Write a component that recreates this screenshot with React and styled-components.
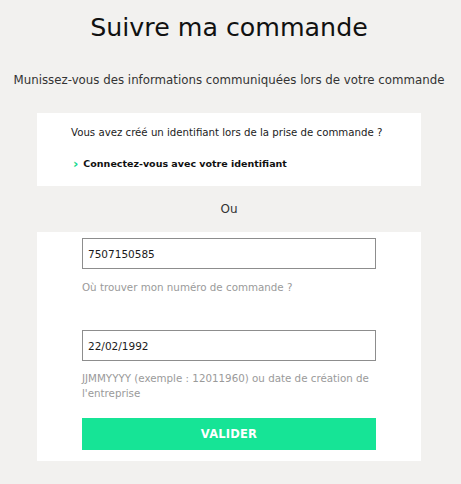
import React from 'react'
import styled, { createGlobalStyle } from 'styled-components'

const Global = createGlobalStyle`
  html, body {
    margin: 0;
    padding: 0;
    background: #f2f1ef;
  }
  body {
    font-family: "DejaVu Sans", "Liberation Sans", sans-serif;
    color: #1b1b1b;
  }
`

const Page = styled.div`
  width: 458px;
  display: flex;
  flex-direction: column;
  align-items: center;
  padding-top: 11px;
`

const Title = styled.h1`
  margin: 0;
  font-size: 25.3px;
  font-weight: normal;
  color: #111;
  line-height: 34px;
`

const Lead = styled.p`
  margin: 27px 0 25px;
  font-size: 11.8px;
  line-height: 16px;
  color: #333;
`

const Card = styled.div`
  width: 384px;
  box-sizing: border-box;
  background: #fff;
  padding: ${p => p.$pad};
  display: flex;
  flex-direction: column;
`

const Question = styled.p`
  margin: 0;
  font-size: 10.2px;
  line-height: 14px;
  color: #1b1b1b;
`

const LoginLink = styled.a`
  margin-top: 18px;
  display: flex;
  align-items: center;
  gap: 5px;
  padding-left: 2px;
  font-size: 9.5px;
  font-weight: bold;
  color: #111;
  text-decoration: none;
`

const Chevron = styled.span`
  color: #14d88d;
  font-weight: bold;
  font-size: 13px;
  line-height: 10px;
`

const Or = styled.div`
  font-size: 12px;
  color: #333;
  line-height: 16px;
  margin: 15px 0 15px;
`

const Field = styled.input`
  width: 294px;
  height: 31px;
  box-sizing: border-box;
  border: 1px solid #8d8d8d;
  padding: 0 5px;
  font-family: inherit;
  font-size: 10.5px;
  color: #1b1b1b;
  outline: none;
  background: #fff;
`

const Hint = styled.p`
  margin: ${p => p.$margin};
  font-size: 10.3px;
  line-height: 15px;
  color: #9a9a9a;
  width: 294px;
`

const Submit = styled.button`
  width: 294px;
  height: 32px;
  border: none;
  background: #16e496;
  color: #fff;
  font-family: inherit;
  font-weight: bold;
  font-size: 11.5px;
  letter-spacing: 0.2px;
  cursor: pointer;
`

export default function App() {
  return (
    <>
      <Global />
      <Page>
        <Title>Suivre ma commande</Title>
        <Lead>Munissez-vous des informations communiquées lors de votre commande</Lead>
        <Card $pad="13px 0 17px 34px">
          <Question>Vous avez créé un identifiant lors de la prise de commande ?</Question>
          <LoginLink href="#">
            <Chevron>›</Chevron>
            Connectez-vous avec votre identifiant
          </LoginLink>
        </Card>
        <Or>Ou</Or>
        <Card $pad="6px 0 11px 45px">
          <Field defaultValue="7507150585" />
          <Hint $margin="11px 0 35px">Où trouver mon numéro de commande ?</Hint>
          <Field defaultValue="22/02/1992" />
          <Hint $margin="10px 0 17px">JJMMYYYY (exemple : 12011960) ou date de création de l'entreprise</Hint>
          <Submit>VALIDER</Submit>
        </Card>
      </Page>
    </>
  )
}
